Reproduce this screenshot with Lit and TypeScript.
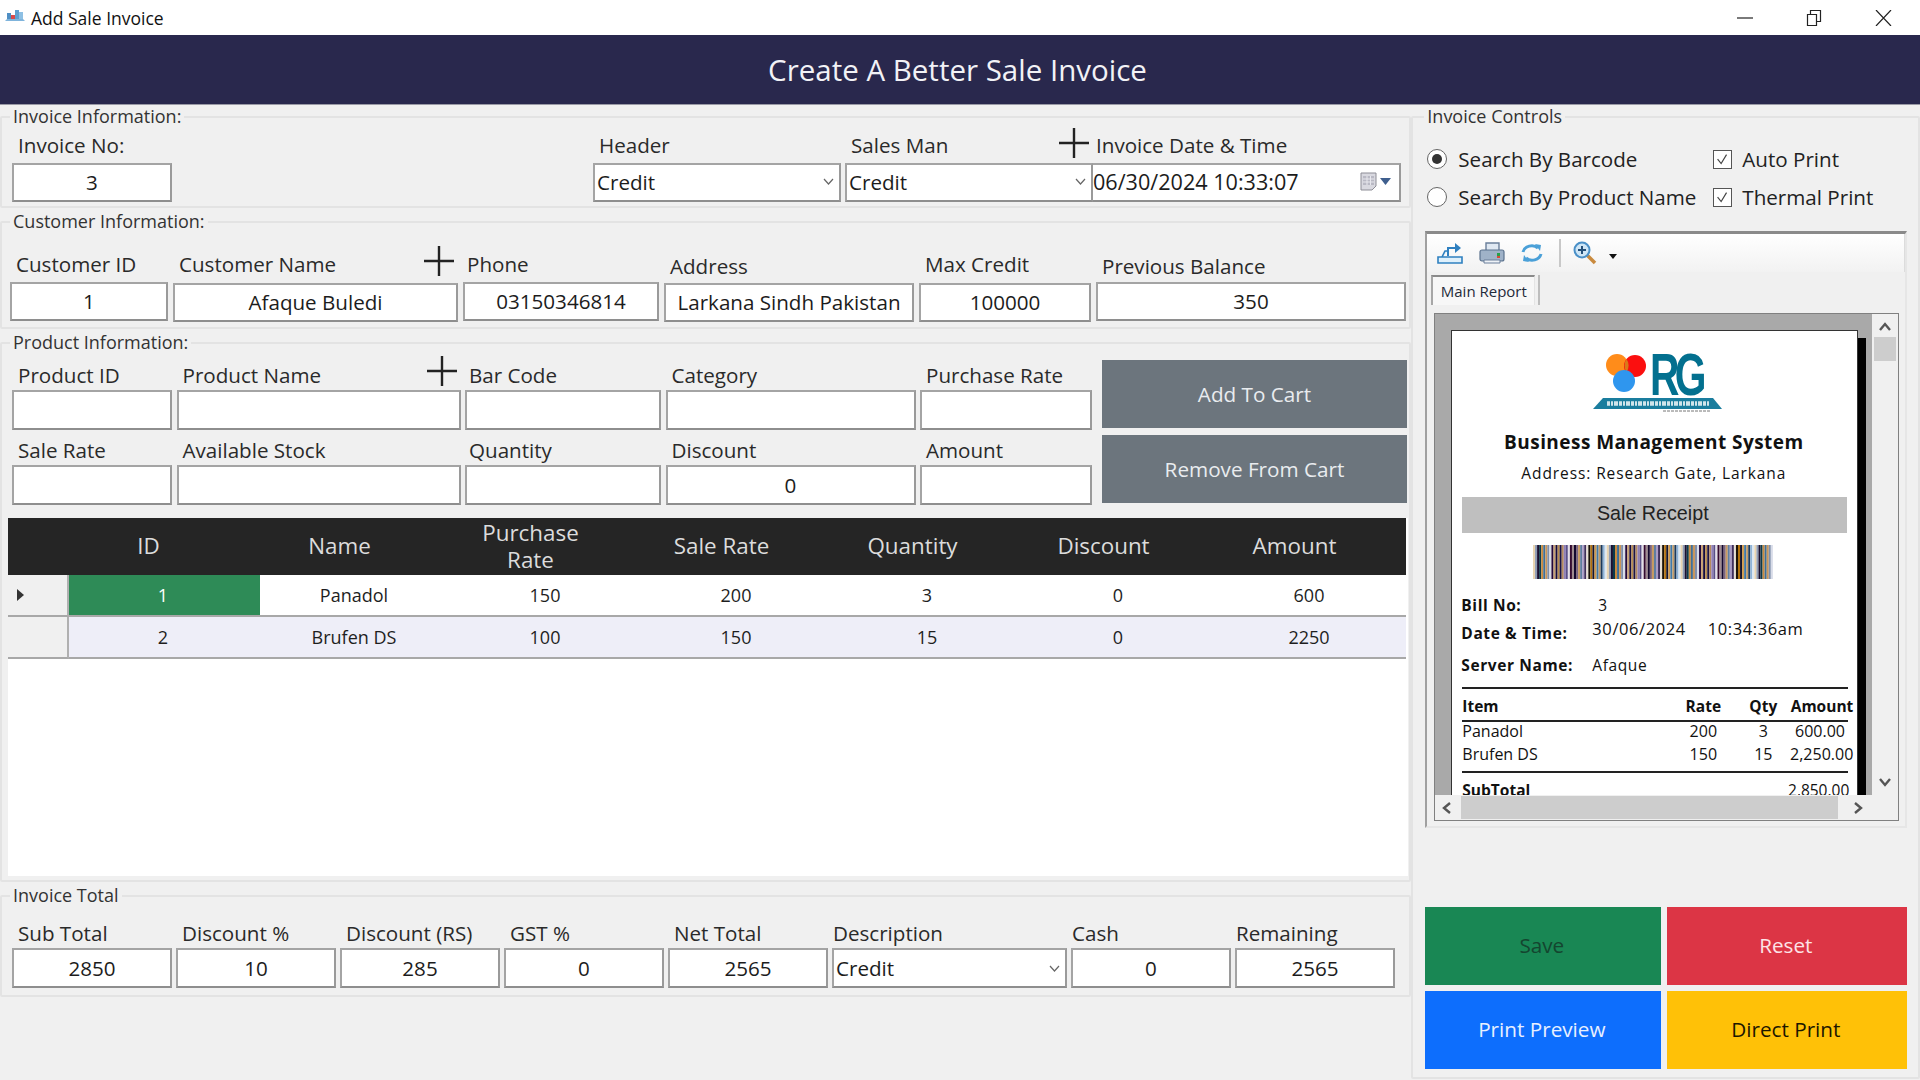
import { LitElement, css, html, svg } from 'lit';
import { customElement } from 'lit/decorators.js';

type Field = { label: string; value?: string; kind?: 'select' | 'date'; plus?: boolean; cls?: string };

const customerFields: Field[] = [
  { label: 'Customer ID', value: '1' },
  { label: 'Customer Name', value: 'Afaque Buledi', plus: true, cls: 'low' },
  { label: 'Phone', value: '03150346814', cls: 'tight' },
  { label: 'Address', value: 'Larkana Sindh Pakistan', cls: 'low dip' },
  { label: 'Max Credit', value: '100000', cls: 'low' },
  { label: 'Previous Balance', value: '350', cls: 'dip' },
];

const productTop: Field[] = [
  { label: 'Product ID' },
  { label: 'Product Name', plus: true },
  { label: 'Bar Code', cls: 'tight' },
  { label: 'Category' },
  { label: 'Purchase Rate' },
];

const productBottom: Field[] = [
  { label: 'Sale Rate' },
  { label: 'Available Stock' },
  { label: 'Quantity', cls: 'tight' },
  { label: 'Discount', value: '0' },
  { label: 'Amount' },
];

const totalFields: Field[] = [
  { label: 'Sub Total', value: '2850' },
  { label: 'Discount %', value: '10' },
  { label: 'Discount (RS)', value: '285' },
  { label: 'GST %', value: '0' },
  { label: 'Net Total', value: '2565' },
  { label: 'Description', value: 'Credit', kind: 'select', cls: 'flush' },
  { label: 'Cash', value: '0', cls: 'flush' },
  { label: 'Remaining', value: '2565', cls: 'flush' },
];

const columns = ['ID', 'Name', 'Purchase\nRate', 'Sale Rate', 'Quantity', 'Discount', 'Amount'];
const rows = [
  ['1', 'Panadol', '150', '200', '3', '0', '600'],
  ['2', 'Brufen DS', '100', '150', '15', '0', '2250'],
];

const barPalettes = [
  ['#e8d4b0', '#8f9cb4', '#1b1030', '#0c3a4a', '#c98a3e', '#3f6f98', '#c9965a', '#7f8eaa', '#d8dce8'],
  ['#23083a', '#c8a070', '#160c3c', '#b88c50', '#1c1444', '#b48a60', '#8f7fb8', '#5a5088', '#e4dfe8'],
  ['#350a30', '#a08c90', '#14082e', '#7a6480', '#c89a60', '#5f7ea0', '#a99ac4', '#40305c', '#e8e0d4'],
  ['#1a1208', '#b4720e', '#15152e', '#d09a4c', '#3f79a9', '#c09a68', '#1c3a5c', '#8fb4d8', '#dfe8f0'],
];

@customElement('app-root')
export class AppRoot extends LitElement {
  static styles = css`
    :host {
      display: block;
      width: 1920px;
      height: 1080px;
      overflow: hidden;
      background: #f0f0f0;
      color: #222;
      font-family: 'Open Sans', 'Noto Sans', sans-serif;
      font-size: 20.6px;
    }
    * {
      box-sizing: border-box;
    }

    .titlebar {
      display: flex;
      align-items: center;
      height: 35px;
      background: #fff;
      padding-left: 5px;
      font-size: 17.5px;
      color: #111;
    }
    .app-icon {
      width: 20px;
      height: 12px;
      margin: -6px 6px 0 0;
    }
    .win-btns {
      display: flex;
      margin-left: auto;
      margin-right: 28px;
      gap: 53px;
      align-items: center;
    }
    .win-btns svg {
      display: block;
      fill: none;
      stroke: #222;
      stroke-width: 1.2;
    }
    .banner {
      height: 70px;
      background: #29284d;
      border-bottom: 1px solid #9a9aa6;
      color: #f2f2f6;
      display: flex;
      align-items: center;
      justify-content: center;
      font-size: 29.5px;
      padding-right: 5px;
    }

    .main {
      display: flex;
      align-items: flex-start;
    }
    .left {
      width: 1415px;
      display: flex;
      flex-direction: column;
      gap: 2px;
    }
    fieldset {
      margin: 0;
      padding: 0;
      min-width: 0;
      border: 2px solid #e3e3e3;
      border-radius: 2px;
    }
    legend {
      margin-left: 8px;
      padding: 0 3px;
      height: 24px;
      line-height: 22px;
      font-size: 18px;
      color: #333;
    }
    .g-invoice {
      height: 103px;
    }
    .g-customer {
      height: 119px;
    }
    .g-product {
      height: 551px;
    }
    .g-total {
      height: 113px;
    }
    .g-controls {
      width: 510px;
      height: 974px;
    }
    .g-controls legend {
      margin-left: 11px;
    }

    .field {
      display: flex;
      flex-direction: column;
      min-width: 0;
    }
    .label-row {
      display: flex;
      justify-content: space-between;
      height: 24px;
      line-height: 24px;
      padding-left: 6px;
      margin-bottom: 3px;
      color: #2a2a2a;
      white-space: nowrap;
    }
    .tight .label-row {
      padding-left: 4px;
    }
    .flush .label-row {
      padding-left: 1px;
    }
    .plus {
      width: 30px;
      height: 30px;
      margin: -7px 4px 0 0;
      flex: none;
      stroke: #222;
      stroke-width: 2.4;
    }
    .input {
      height: 40px;
      display: flex;
      align-items: center;
      justify-content: center;
      background: #fff;
      border: 2px solid #a4a4a4;
      border-bottom-color: #8e8e8e;
      border-right-color: #9a9a9a;
      white-space: nowrap;
      color: #1c1c1c;
      overflow: hidden;
    }
    .input.select,
    .input.date {
      justify-content: space-between;
      padding-left: 2px;
    }
    .input.select svg {
      width: 11px;
      height: 7px;
      margin-right: 5px;
      fill: none;
      stroke: #666;
      stroke-width: 1.2;
    }
    .input.date {
      border-left: 0;
      padding-left: 0;
      padding-right: 8px;
      font-size: 21.6px;
    }
    .date-icons {
      display: flex;
      align-items: center;
      gap: 2px;
    }

    .row-invoice {
      display: flex;
      margin: 6px 0 0 10px;
    }
    .f-no {
      width: 160px;
      margin-right: 421px;
    }
    .f-header {
      width: 248px;
      margin-right: 4px;
    }
    .f-sales {
      width: 248px;
    }
    .f-date {
      width: 308px;
    }
    .f-date .label-row {
      padding-left: 3px;
    }
    .row-invoice .label-row {
      margin-bottom: 4px;
      line-height: 21px;
    }
    .row-invoice .input {
      height: 39px;
      padding-bottom: 2px;
    }

    .row-customer {
      display: grid;
      grid-template-columns: 158px 285px 196px 250px 172px 310px;
      column-gap: 5px;
      margin: 19px 0 0 8px;
    }
    .row-customer .label-row {
      margin-bottom: 5px;
      line-height: 22px;
    }
    .row-customer .input {
      height: 39px;
      padding-bottom: 2px;
    }
    .row-customer .low .input {
      margin-top: 1px;
    }
    .row-customer .dip .label-row {
      line-height: 26px;
    }

    .row-product {
      display: flex;
      margin: 8px 0 0 10px;
    }
    .product-fields {
      display: grid;
      grid-template-columns: 160px 284px 196px 250px 172px;
      column-gap: 4.5px;
      row-gap: 8px;
    }
    .product-btns {
      width: 305px;
      margin: -3px 0 0 10px;
      display: flex;
      flex-direction: column;
      gap: 7px;
    }
    .product-btns button {
      height: 68px;
    }
    button {
      border: 0;
      padding: 0;
      font: inherit;
      background: #6c757d;
      color: #e9ecef;
      font-size: 20.7px;
    }

    .dgv {
      width: 1400px;
      height: 358px;
      margin: 13px 0 0 6px;
      background: #fff;
      display: grid;
      grid-template-columns: 61px repeat(7, 191px);
      grid-template-rows: 57px 42px 42px;
      text-align: center;
      font-size: 18px;
    }
    .dgv > div {
      display: flex;
      align-items: center;
      justify-content: center;
    }
    .dgv .th {
      background: #252525;
      color: #dcdcdc;
      font-size: 22.4px;
      line-height: 27px;
      padding: 0 32px 2px 0;
      white-space: pre-line;
    }
    .dgv .rh {
      background: #f0f0f0;
      border-bottom: 2px solid #a8a8a8;
      border-right: 2px solid #b0b0b0;
      justify-content: flex-start;
      padding-left: 9px;
    }
    .dgv .td {
      border-bottom: 2px solid #a8a8a8;
      color: #1e1e1e;
      padding-right: 3px;
    }
    .dgv .alt {
      background: #eeeef8;
    }
    .dgv .sel {
      background: #2e8b57;
      color: #fff;
    }
    .tri {
      width: 0;
      height: 0;
      border-left: 7px solid #333;
      border-top: 6px solid transparent;
      border-bottom: 6px solid transparent;
    }

    .row-total {
      display: grid;
      grid-template-columns: repeat(5, 160px) 235px 160px 160px;
      column-gap: 4px;
      margin: 13px 0 0 10px;
    }

    .options {
      display: grid;
      grid-template-columns: 286px auto;
      grid-auto-rows: 38px;
      margin: 11px 0 0 14px;
      white-space: nowrap;
    }
    .opt {
      display: flex;
      align-items: center;
      line-height: 24px;
    }
    .radio {
      width: 20px;
      height: 20px;
      margin-right: 11px;
      border-radius: 50%;
      border: 1.5px solid #666;
      background: #fff;
      display: flex;
      align-items: center;
      justify-content: center;
    }
    .radio i {
      width: 10px;
      height: 10px;
      border-radius: 50%;
      background: #333;
    }
    .check {
      width: 19px;
      height: 19px;
      margin-right: 10px;
      border: 1.5px solid #555;
      background: #fff;
      fill: none;
      stroke: #444;
      stroke-width: 1.3;
    }

    .viewer {
      width: 482px;
      height: 597px;
      margin: 15px 0 0 12px;
      border-top: 3px solid #8a8a8a;
      border-left: 2px solid #a0a0a0;
      border-right: 2px solid #e6e6e6;
      border-bottom: 2px solid #e6e6e6;
    }
    .toolbar {
      height: 38px;
      display: flex;
      align-items: center;
      gap: 16px;
      padding: 0 0 0 10px;
      background: linear-gradient(#fff, #f2f2f2);
      border-right: 1px solid #dcdcdc;
    }
    .toolbar svg {
      flex: none;
      display: block;
    }
    .tool-sep {
      width: 2px;
      height: 28px;
      background: #c8c8c8;
      margin: 0 -4px 0 0;
    }
    .tool-arrow {
      width: 0;
      height: 0;
      margin: 6px 0 0 -4px;
      border-top: 5px solid #111;
      border-left: 4px solid transparent;
      border-right: 4px solid transparent;
    }
    .tabs {
      display: flex;
      margin: 3px 0 0 4px;
      height: 30px;
    }
    .tab {
      width: 104px;
      height: 30px;
      line-height: 28px;
      text-align: center;
      font-size: 15px;
      color: #1f2a3a;
      background: #f7f7f7;
      border-top: 2px solid #8a8a8a;
      border-left: 2px solid #a6a6a6;
      border-right: 1px solid #e4e4e4;
      white-space: nowrap;
    }
    .tab-sep {
      width: 2px;
      height: 30px;
      margin-left: 3px;
      background: #bdbdbd;
    }
    .frame {
      width: 465px;
      height: 508px;
      margin: 8px 0 0 7px;
      border: 1px solid #808080;
      display: grid;
      grid-template-columns: 1fr 26px;
      grid-template-rows: 1fr 25px;
      background: #f0f0f0;
    }
    .canvas {
      background: #a9a9a9;
      overflow: hidden;
      padding: 16px 0 0 16px;
    }
    .paper {
      width: 407px;
      height: 640px;
      background: #fff;
      border: 1px solid #333;
      box-shadow: 8px 8px 0 #000;
      padding: 19px 0 0 10px;
      color: #111;
      font-size: 15.5px;
      white-space: nowrap;
    }
    .logo {
      display: block;
      width: 130px;
      height: 62px;
      margin-left: 131px;
    }
    .co-name {
      width: 383px;
      height: 26px;
      line-height: 26px;
      margin-top: 17px;
      text-align: center;
      font-weight: 700;
      font-size: 19px;
      letter-spacing: 0.45px;
    }
    .co-addr {
      width: 383px;
      height: 26px;
      line-height: 26px;
      margin-top: 5px;
      text-align: center;
      font-size: 15.5px;
      letter-spacing: 0.9px;
    }
    .band {
      width: 385px;
      height: 36px;
      margin-top: 11px;
      padding-right: 4px;
      background: #bfbfbf;
      text-align: center;
      line-height: 32px;
      font-family: 'Liberation Sans', sans-serif;
      font-size: 19.7px;
      color: #222;
    }
    .barcode {
      display: block;
      width: 240px;
      height: 34px;
      margin: 12px 0 0 71px;
    }
    .info {
      display: grid;
      grid-template-columns: 131px auto;
      margin-top: 16px;
      margin-left: -1px;
      line-height: 20px;
    }
    .info b {
      font-weight: 700;
      letter-spacing: 0.6px;
    }
    .info span {
      letter-spacing: 0.6px;
    }
    .info .i-date {
      margin-top: 8px;
    }
    .info .i-server {
      margin-top: 12px;
    }
    .info .v-bill {
      padding-left: 6px;
    }
    .info .v-date {
      margin-top: 4px;
      font-size: 16.5px;
      word-spacing: 17px;
    }
    .rule {
      width: 386px;
      height: 2px;
      background: #222;
    }
    .info + .rule {
      margin-top: 12px;
    }
    .items {
      width: 391px;
      display: grid;
      grid-template-columns: 216px 50px 70px 55px;
      text-align: center;
    }
    .items > * {
      justify-self: center;
    }
    .items > :nth-child(4n + 1) {
      justify-self: start;
    }
    .items > :nth-child(4n) {
      justify-self: end;
    }
    .i-head {
      font-weight: 700;
      line-height: 20px;
      margin-top: 7px;
    }
    .i-body {
      line-height: 23px;
      font-size: 16px;
      margin-top: -2px;
    }
    .i-body + .rule {
      margin-top: 5px;
    }
    .i-sub {
      font-weight: 700;
      line-height: 20px;
      margin-top: 7px;
    }
    .i-sub .val {
      font-weight: 400;
    }
    .i-head + .rule {
      margin-top: 4px;
    }
    .sb-v {
      display: flex;
      flex-direction: column;
      align-items: center;
      justify-content: space-between;
      padding: 8px 0 8px;
      background: #f0f0f0;
    }
    .sb-thumb-v {
      width: 22px;
      height: 24px;
      background: #cdcdcd;
      margin: 6px 0 auto;
    }
    .sb-h {
      display: flex;
      align-items: center;
      background: #f0f0f0;
      padding: 0 7px;
    }
    .sb-thumb-h {
      width: 377px;
      height: 23px;
      margin: 0 16px 0 10px;
      background: #cdcdcd;
    }
    .sb-corner {
      background: #f0f0f0;
    }
    .arrow {
      width: 12px;
      height: 9px;
      fill: none;
      stroke: #555;
      stroke-width: 2.4;
    }
    .arrow.side {
      width: 9px;
      height: 12px;
    }

    .actions {
      display: grid;
      grid-template-columns: 236px 240px;
      grid-auto-rows: 78px;
      gap: 6px;
      margin: 79px 0 0 12px;
    }
    .actions button {
      padding: 0 3px 2px 0;
    }
    .b-save {
      background: #198754;
      color: #14452f;
    }
    .b-reset {
      background: #dc3545;
      color: #fde4e7;
    }
    .b-preview {
      background: #0d6efd;
      color: #e8f0ff;
    }
    .b-direct {
      background: #ffc107;
      color: #1c1600;
    }
  `;

  private plus() {
    return html`<svg class="plus" viewBox="0 0 30 30"><path d="M15 0V30M0 15H30" /></svg>`;
  }

  private chevron() {
    return html`<svg viewBox="0 0 11 7"><path d="M1 1l4.5 5L10 1" /></svg>`;
  }

  private field(f: Field) {
    return html`<div class="field ${f.cls ?? ''}">
      <div class="label-row"><span>${f.label}</span>${f.plus ? this.plus() : ''}</div>
      ${f.kind === 'select'
        ? html`<div class="input select"><span>${f.value}</span>${this.chevron()}</div>`
        : html`<div class="input">${f.value ?? ''}</div>`}
    </div>`;
  }

  private barcode() {
    const bars = [];
    let x = 0;
    for (let g = 0; g < 13; g++) {
      const colors = barPalettes[g % barPalettes.length];
      for (const c of colors) {
        bars.push(svg`<rect x=${x} y="0" width="2.06" height="34" fill=${c} />`);
        x += 2.05;
      }
    }
    return html`<svg class="barcode" viewBox="0 0 240 34" preserveAspectRatio="none">${bars}</svg>`;
  }

  private logo() {
    return html`<svg class="logo" viewBox="0 0 130 62">
      <circle cx="24" cy="15" r="11" fill="#ff8c1a" />
      <circle cx="42" cy="16" r="11" fill="#fb0f0f" />
      <path d="M33.5 9a11 11 0 0 1 0 13 11 11 0 0 1 -2-6.5 11 11 0 0 1 2-6.5z" fill="#d97a1a" />
      <circle cx="31" cy="31" r="11" fill="#2f96ee" />
      <text
        transform="translate(57 45) scale(.68 1)"
        font-family="Liberation Sans, sans-serif"
        font-weight="700"
        font-size="60"
        letter-spacing="-7"
        fill="#03708f"
      >RG</text>
      <path d="M10 48H120L129 59H0z" fill="#1a7d9e" />
      <path d="M14 53.5H116" stroke="#fff" stroke-width="4.5" stroke-dasharray="3 1 2 1 4 1" opacity=".8" />
      <path d="M70 61H118" stroke="#777" stroke-width="1" stroke-dasharray="3 1" />
    </svg>`;
  }

  private report() {
    return html`<div class="paper">
      ${this.logo()}
      <div class="co-name">Business Management System</div>
      <div class="co-addr">Address: Research Gate, Larkana</div>
      <div class="band">Sale Receipt</div>
      ${this.barcode()}
      <div class="info">
        <b>Bill No:</b><span class="v-bill">3</span>
        <b class="i-date">Date &amp; Time:</b><span class="v-date">30/06/2024 10:34:36am</span>
        <b class="i-server">Server Name:</b><span class="i-server">Afaque</span>
      </div>
      <div class="rule"></div>
      <div class="items i-head"><span>Item</span><span>Rate</span><span>Qty</span><span>Amount</span></div>
      <div class="rule"></div>
      <div class="items i-body">
        <span>Panadol</span><span>200</span><span>3</span><span>600.00&nbsp;&nbsp;</span>
        <span>Brufen DS</span><span>150</span><span>15</span><span>2,250.00</span>
      </div>
      <div class="rule"></div>
      <div class="items i-sub">
        <span>SubTotal</span><span></span><span></span><span class="val">2,850.00&nbsp;</span>
      </div>
    </div>`;
  }

  private toolbar() {
    return html`<div class="toolbar">
      <svg width="26" height="22" viewBox="0 0 26 22">
        <path d="M1 15h24v6H1zM5 15l3-6h3" fill="#dff0fb" stroke="#2f80c0" stroke-width="1.6" />
        <path d="M11 14V6h8" fill="none" stroke="#2f80c0" stroke-width="2" />
        <path d="M18 1l6 5-6 5z" fill="#2f80c0" />
      </svg>
      <svg width="26" height="22" viewBox="0 0 26 22">
        <path d="M7 1h13v8H7z" fill="#dfe8f2" stroke="#6a7f9a" stroke-width="1.4" />
        <rect x="1" y="8" width="24" height="11" rx="2" fill="#9fb2c8" stroke="#5b728e" stroke-width="1.2" />
        <path d="M5 18h16v3H5z" fill="#eef2f7" stroke="#6a7f9a" />
        <rect x="18" y="11" width="3" height="3" fill="#27a04a" />
        <rect x="18" y="14" width="3" height="2" fill="#d84a3a" />
      </svg>
      <svg width="22" height="20" viewBox="0 0 22 20">
        <path d="M2 9a9 8 0 0 1 15-4" fill="none" stroke="#4aa0d8" stroke-width="3" />
        <path d="M14 1l6 1-1 6z" fill="#4aa0d8" />
        <path d="M20 11a9 8 0 0 1-15 4" fill="none" stroke="#4aa0d8" stroke-width="3" />
        <path d="M8 19l-6-1 1-6z" fill="#4aa0d8" />
      </svg>
      <div class="tool-sep"></div>
      <svg width="24" height="24" viewBox="0 0 24 24">
        <path d="M14 14l8 8" stroke="#c98a3e" stroke-width="3.5" />
        <circle cx="9" cy="9" r="7.5" fill="#cfe6f6" stroke="#4a90c8" stroke-width="2" />
        <path d="M5 9h8M9 5v8" stroke="#24507a" stroke-width="2" />
      </svg>
      <div class="tool-arrow"></div>
    </div>`;
  }

  render() {
    return html`
      <div class="titlebar">
        <svg class="app-icon" viewBox="0 0 20 12">
          <path d="M0 12l2-2H18l2 2z" fill="#7fb4dc" />
          <rect x="2" y="4" width="4" height="6" fill="#4f8fc4" />
          <rect x="6" y="6" width="4" height="4" fill="#d94a4a" />
          <rect x="10" y="1" width="4" height="9" fill="#5ea0d0" />
          <rect x="14" y="3" width="4" height="7" fill="#8ec0e4" />
        </svg>
        <span>Add Sale Invoice</span>
        <div class="win-btns">
          <svg width="16" height="2" viewBox="0 0 16 2"><path d="M0 1H16" /></svg>
          <svg width="16" height="16" viewBox="0 0 16 16">
            <path d="M1.5 4.5h9v11h-9zM4.5 4.5V.5h10v11h-4" />
          </svg>
          <svg width="17" height="16" viewBox="0 0 17 16"><path d="M1 0L16 16M16 0L1 16" /></svg>
        </div>
      </div>
      <div class="banner">Create A Better Sale Invoice</div>

      <div class="main">
        <div class="left">
          <fieldset class="g-invoice">
            <legend>Invoice Information:</legend>
            <div class="row-invoice">
              <div class="field f-no">
                <div class="label-row"><span>Invoice No:</span></div>
                <div class="input">3</div>
              </div>
              <div class="field f-header">
                <div class="label-row"><span>Header</span></div>
                <div class="input select"><span>Credit</span>${this.chevron()}</div>
              </div>
              <div class="field f-sales">
                <div class="label-row"><span>Sales Man</span>${this.plus()}</div>
                <div class="input select"><span>Credit</span>${this.chevron()}</div>
              </div>
              <div class="field f-date">
                <div class="label-row"><span>Invoice Date &amp; Time</span></div>
                <div class="input date">
                  <span>06/30/2024 10:33:07</span>
                  <div class="date-icons">
                    <svg width="18" height="19" viewBox="0 0 18 19">
                      <path d="M1 1h15v13l-4 4H1z" fill="#d9d9e0" stroke="#8d8d96" />
                      <path d="M3 4h11v9H3z" fill="#b9b9c4" />
                      <path d="M3 7h11M3 10h11M7 4v9M10.5 4v9" stroke="#e8e8ee" />
                    </svg>
                    <svg width="11" height="7" viewBox="0 0 11 7"><path d="M0 0h11L5.5 7z" fill="#3f5f8e" /></svg>
                  </div>
                </div>
              </div>
            </div>
          </fieldset>

          <fieldset class="g-customer">
            <legend>Customer Information:</legend>
            <div class="row-customer">${customerFields.map((f) => this.field(f))}</div>
          </fieldset>

          <fieldset class="g-product">
            <legend>Product Information:</legend>
            <div class="row-product">
              <div class="product-fields">
                ${productTop.map((f) => this.field(f))} ${productBottom.map((f) => this.field(f))}
              </div>
              <div class="product-btns">
                <button>Add To Cart</button>
                <button>Remove From Cart</button>
              </div>
            </div>
            <div class="dgv">
              <div class="th"></div>
              ${columns.map((c) => html`<div class="th">${c}</div>`)}
              ${rows.map(
                (r, i) => html`
                  <div class="rh">${i === 0 ? html`<div class="tri"></div>` : ''}</div>
                  ${r.map(
                    (v, j) =>
                      html`<div class="td ${i === 1 ? 'alt' : ''} ${i === 0 && j === 0 ? 'sel' : ''}">${v}</div>`
                  )}
                `
              )}
            </div>
          </fieldset>

          <fieldset class="g-total">
            <legend>Invoice Total</legend>
            <div class="row-total">${totalFields.map((f) => this.field(f))}</div>
          </fieldset>
        </div>

        <fieldset class="g-controls">
          <legend>Invoice Controls</legend>
          <div class="options">
            <div class="opt"><div class="radio"><i></i></div>Search By Barcode</div>
            <div class="opt">
              <svg class="check" viewBox="0 0 19 19"><path d="M4 9l4 5 6-10" /></svg>Auto Print
            </div>
            <div class="opt"><div class="radio"></div>Search By Product Name</div>
            <div class="opt">
              <svg class="check" viewBox="0 0 19 19"><path d="M4 9l4 5 6-10" /></svg>Thermal Print
            </div>
          </div>

          <div class="viewer">
            ${this.toolbar()}
            <div class="tabs">
              <div class="tab">Main Report</div>
              <div class="tab-sep"></div>
            </div>
            <div class="frame">
              <div class="canvas">${this.report()}</div>
              <div class="sb-v">
                <svg class="arrow" viewBox="0 0 12 9"><path d="M1 8l5-6 5 6" /></svg>
                <div class="sb-thumb-v"></div>
                <svg class="arrow" viewBox="0 0 12 9"><path d="M1 1l5 6 5-6" /></svg>
              </div>
              <div class="sb-h">
                <svg class="arrow side" viewBox="0 0 9 12"><path d="M8 1L2 6l6 5" /></svg>
                <div class="sb-thumb-h"></div>
                <svg class="arrow side" viewBox="0 0 9 12"><path d="M1 1l6 5-6 5" /></svg>
              </div>
              <div class="sb-corner"></div>
            </div>
          </div>

          <div class="actions">
            <button class="b-save">Save</button>
            <button class="b-reset">Reset</button>
            <button class="b-preview">Print Preview</button>
            <button class="b-direct">Direct Print</button>
          </div>
        </fieldset>
      </div>
    `;
  }
}

declare global {
  interface HTMLElementTagNameMap {
    'app-root': AppRoot;
  }
}
